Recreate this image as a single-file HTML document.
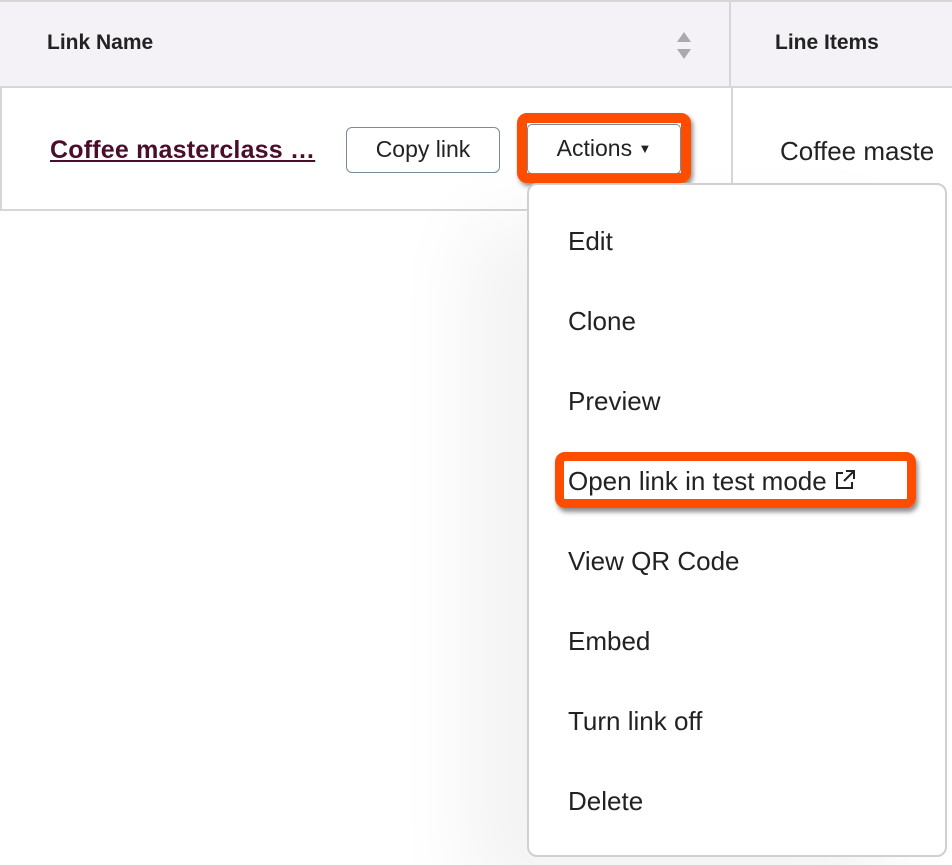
<!DOCTYPE html>
<html><head><style>
body{margin:0;width:952px;height:858px;background:#fff;font-family:"Liberation Sans",sans-serif;color:#213343;position:relative;overflow:hidden}
.a{position:absolute}
</style></head><body>
<div class="a" style="left:0;top:0;width:952px;height:88px;background:#f5f2f7;border-top:2px solid #d6d6d6;border-bottom:2px solid #d6d6d6;box-sizing:border-box"></div>
<div class="a" style="left:729px;top:0;width:2px;height:88px;background:#d6d6d6"></div>
<div class="a" style="left:731px;top:88px;width:2px;height:95px;background:#d6d6d6"></div>
<div class="a" style="left:0;top:88px;width:2px;height:123px;background:#d6d6d6"></div>
<div class="a" style="left:0;top:209px;width:527px;height:2px;background:#d6d6d6"></div>
<div class="a" style="left:47px;top:31px;font-size:21px;font-weight:bold;color:#222">Link Name</div>
<div class="a" style="left:775px;top:31px;font-size:21px;font-weight:bold;color:#222">Line Items</div>
<div class="a" style="left:677px;top:32px;width:0;height:0;border-left:7px solid transparent;border-right:7px solid transparent;border-bottom:10px solid #aaa"></div>
<div class="a" style="left:677px;top:49px;width:0;height:0;border-left:7px solid transparent;border-right:7px solid transparent;border-top:10px solid #aaa"></div>
<div class="a" style="left:50px;top:136px;font-size:25px;font-weight:bold;color:#4a0d2c;text-decoration:underline;letter-spacing:0.2px">Coffee masterclass …</div>
<div class="a" style="left:346px;top:127px;width:154px;height:46px;border:1.5px solid #7c8a98;border-radius:6px;box-sizing:border-box;font-size:23px;text-align:center;line-height:43px;color:#222">Copy link</div>
<div class="a" style="left:517px;top:113px;width:174px;height:70px;border:10px solid #ff4d00;border-radius:10px;box-sizing:border-box;box-shadow:2px 3px 5px rgba(0,0,0,.45)"></div>
<div class="a" style="left:527px;top:124px;width:154px;height:50px;border:1.5px solid #7c8a98;border-radius:5px;box-sizing:border-box;font-size:23px;text-align:center;line-height:47px;color:#222;background:#fff">Actions <span style="font-size:13px;vertical-align:3px">▼</span></div>
<div class="a" style="left:780px;top:136px;font-size:26px;color:#222;white-space:nowrap">Coffee maste</div>
<div class="a" style="left:527px;top:183px;width:420px;height:674px;border:2px solid #d0d0d0;border-radius:10px;box-sizing:border-box;background:#fff;box-shadow:-60px 40px 80px rgba(0,0,0,0.05)"></div>
<div class="a" style="left:568px;top:225px;font-size:26px;line-height:32px;color:#222">
<div style="height:80px">Edit</div>
<div style="height:80px">Clone</div>
<div style="height:80px">Preview</div>
<div style="height:80px">Open link in test mode <svg width="22" height="22" viewBox="0 0 22 22" style="vertical-align:-1px" fill="none" stroke="#222" stroke-width="2"><path d="M9 4H3v15h15v-6M12 2h8v8M20 2l-10 10"/></svg></div>
<div style="height:80px">View QR Code</div>
<div style="height:80px">Embed</div>
<div style="height:80px">Turn link off</div>
<div style="height:80px">Delete</div>
</div>
<div class="a" style="left:555px;top:452px;width:361px;height:56px;border:9px solid #ff4d00;border-radius:10px;box-sizing:border-box;box-shadow:2px 4px 5px rgba(0,0,0,.45)"></div>
</body></html>
